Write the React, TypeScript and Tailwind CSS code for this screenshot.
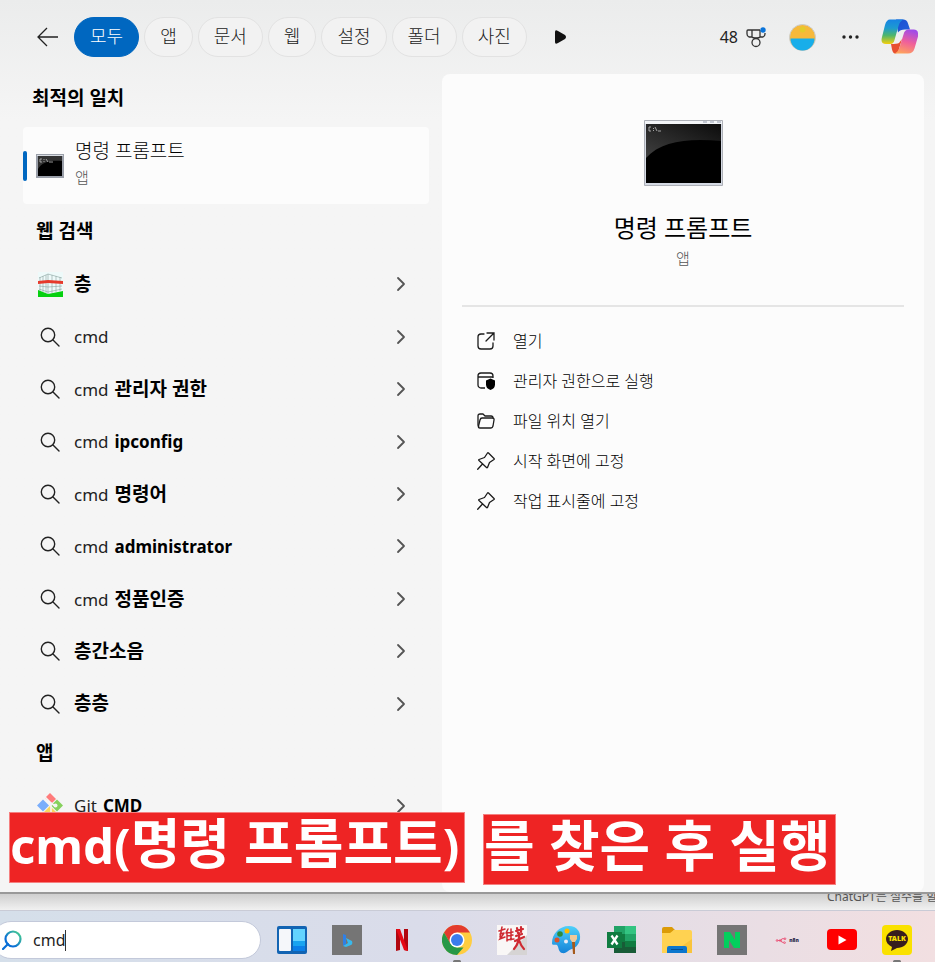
import { ChevronRight } from 'lucide-react';
import type { ReactNode } from 'react';

const filters = ['모두', '앱', '문서', '웹', '설정', '폴더', '사진'];

interface Suggestion {
  query?: string;
  match?: string;
  icon?: ReactNode;
  latin?: boolean;
}

const SearchIcon = () => (
  <svg width="20" height="20" viewBox="0 0 20 20" fill="none" stroke="#222" strokeWidth="1.4">
    <circle cx="8" cy="8" r="6.7" />
    <path d="M13 13l6 6" strokeLinecap="round" />
  </svg>
);

const BuildingIcon = () => (
  <svg width="25" height="25" viewBox="0 0 25 25">
    <path fill="#eefafa" d="M0 0h25v25H0z" />
    <path d="M1 6l9-4 14 4M1 10h23M1 14l9 1 14-1M1 17l9 3 14-3M2 5v14M5 4v16M8 3v18M10 2v20M14 3v18M18 4v16M22 5v14" fill="none" stroke="#8aa3a0" strokeWidth="0.6" />
    <path fill="#e63a2c" d="M0 9l10-1 15 1v3l-15-1-10 1z" />
    <path fill="#06d010" d="M0 18l10 4 15-3v6H0z" />
  </svg>
);

const GitIcon = () => (
  <svg width="26" height="26" viewBox="0 0 26 26">
    <path fill="#ff7b7b" d="M13 0l6 6-4 4-2-1-5-4z" />
    <path fill="#7aaefb" d="M6 6.5l6 6-6 6-6-6z" />
    <path fill="#86d15d" d="M20 6.500l6 6-6 6-6-6z" />
    <path fill="#fbd75c" d="M13 13l6 6-6 6-6-6z" />
    <path d="M8 4l6 6v9M14 10l4 3" fill="none" stroke="#f5f5f5" strokeWidth="1.600" />
    <circle cx="18.500" cy="12.500" r="2" fill="#f5f5f5" />
  </svg>
);

const suggestions: Suggestion[] = [
  { match: '층', icon: <BuildingIcon /> },
  { query: 'cmd' },
  { query: 'cmd', match: '관리자 권한' },
  { query: 'cmd', match: 'ipconfig', latin: true },
  { query: 'cmd', match: '명령어' },
  { query: 'cmd', match: 'administrator', latin: true },
  { query: 'cmd', match: '정품인증' },
  { match: '층간소음' },
  { match: '층층' },
];

const SuggestionRow = ({ query, match, icon, latin }: Suggestion) => (
  <button className="flex min-h-0 flex-1 items-center pl-[13px] pr-4 text-left">
    <span className="flex w-7 shrink-0 justify-center">{icon ?? <SearchIcon />}</span>
    <span className="ml-[10px] flex flex-1 items-baseline gap-[6px] whitespace-nowrap">
      {query && <span className="text-[17px] text-[#222]">{query}</span>}
      {match && <b className={latin ? 'text-[17px]' : 'text-[19px]'}>{match}</b>}
    </span>
    <ChevronRight size={24} strokeWidth={1.8} className="text-[#555]" />
  </button>
);

const ConsoleIcon = ({ className }: { className: string }) => (
  <svg className={className} viewBox="0 0 79 66">
    <path fill="#d5dae4" stroke="#aeb1b8" d="M.5.5h78v65H.5z" />
    <path fill="#f3f5f8" d="M1 1h77v3H1z" />
    <path fill="#c3c8d2" d="M59 1h4v2h-4zM66 1h4v2h-4zM73 1h4v2h-4z" />
    <path fill="#000" d="M2 4h75v59H2z" />
    <path fill="url(#glass)" d="M2 4h75v17C44 18 17 21 2 38z" />
    <defs>
      <linearGradient id="glass" x1="0" y1="1" x2="1" y2="0">
        <stop offset="0" stopColor="#404040" />
        <stop offset="1" stopColor="#0c0c0c" />
      </linearGradient>
    </defs>
    <path d="M7 7H5v4h2M9.500 8v1M9.500 10v1M11 7l2 4M14 11h3" fill="none" stroke="#c4c4c4" strokeWidth=".8" />
  </svg>
);

const SmallConsoleIcon = () => (
  <svg width="28" height="24" viewBox="0 0 28 24">
    <path fill="#9a9fa9" d="M0 0h28v24H0z" />
    <path fill="#d9dde3" d="M1 1h26v1H1z" />
    <path fill="#000" d="M2 2h24v20H2z" />
    <path fill="#333" d="M2 2h24v5C14 6 6 8 2 15z" />
    <path d="M6 5H4v3h2M8 5v1M8 7v1M10 5l2 3M13 8h4" fill="none" stroke="#bbb" strokeWidth=".8" />
  </svg>
);

const OpenIcon = () => (
  <svg width="18" height="18" viewBox="0 0 18 18" fill="none" stroke="#1b1b1b" strokeWidth="1.300" strokeLinecap="round">
    <path d="M7 2H4a3 3 0 0 0-3 3v9a3 3 0 0 0 3 3h9a3 3 0 0 0 3-3v-3M10 1h7v7M17 1l-8 8" />
  </svg>
);

const AdminIcon = () => (
  <svg width="18" height="18" viewBox="0 0 18 18" fill="none" stroke="#1b1b1b" strokeWidth="1.300">
    <path d="M8 16H4a3 3 0 0 1-3-3V4a3 3 0 0 1 3-3h9a3 3 0 0 1 3 3v2M1 5h15" />
    <path fill="#000" stroke="none" d="M13.500 6.500l4.500 2v4q0 4-4.500 5.500Q9 16.500 9 12.500v-4z" />
  </svg>
);

const FolderIcon = () => (
  <svg width="18" height="16" viewBox="0 0 18 16" fill="none" stroke="#1b1b1b" strokeWidth="1.300" strokeLinejoin="round">
    <path d="M2 14Q1 13 1 12V3q0-2 2-2h3l2 2h6q2 0 2 2" />
    <path d="M5 5h10q2.500 0 2 2l-1 6q-.5 2-2 2H3q-2 0-1.500-2L3 7q.5-2 2-2z" />
  </svg>
);

const PinIcon = () => (
  <svg width="18" height="18" viewBox="0 0 18 18" fill="none" stroke="#1b1b1b" strokeWidth="1.300" strokeLinejoin="round" strokeLinecap="round">
    <path d="M10.500 1Q11 .5 11.500 1L17 6.500Q17.500 7 17 7.500L12.500 10.500 10.500 15.500Q10 16 9.500 15.500L2 8.500Q1.500 8 2 7.500L7.500 5.500zM5.500 12L.7 17.300" />
  </svg>
);

const actions = [
  { label: '열기', icon: <OpenIcon /> },
  { label: '관리자 권한으로 실행', icon: <AdminIcon /> },
  { label: '파일 위치 열기', icon: <FolderIcon /> },
  { label: '시작 화면에 고정', icon: <PinIcon /> },
  { label: '작업 표시줄에 고정', icon: <PinIcon /> },
];

const CopilotIcon = () => (
  <svg width="38" height="36" viewBox="0 0 38 36">
    <defs>
      <linearGradient id="cpA" x1="0" y1="0" x2="0" y2="1">
        <stop offset="0" stopColor="#1783e4" />
        <stop offset=".35" stopColor="#1d9bd0" />
        <stop offset=".65" stopColor="#4fb66b" />
        <stop offset="1" stopColor="#f5cf0b" />
      </linearGradient>
      <linearGradient id="cpB" x1=".6" y1="0" x2=".3" y2="1">
        <stop offset="0" stopColor="#a14be8" />
        <stop offset=".5" stopColor="#f0609a" />
        <stop offset="1" stopColor="#ffa45c" />
      </linearGradient>
      <linearGradient id="cpC" x1="0" y1="0" x2="1" y2="1">
        <stop offset="0" stopColor="#1b4fd0" />
        <stop offset="1" stopColor="#2360dc" />
      </linearGradient>
    </defs>
    <path fill="url(#cpC)" d="M15 .5h7q4 0 5 4l2 6h-5q-5 0-7 3z" />
    <path fill="#e8502e" d="M10 25q6 0 8-1l3-4-3 10q-1 4.500-4 4.500-2 0-3-4z" />
    <path fill="url(#cpA)" d="M9 .5h14q-4 1-5.500 6.500L13.500 21q-1 4-4 4H5q-6 0-4-7L4 6Q5.500.5 9 .5z" />
    <path fill="url(#cpB)" d="M28 10.500h5q5 0 4 7l-3.500 12q-1.500 5-6.500 5H13q4-1 5.500-6l4-13q1-5 5.500-5z" />
  </svg>
);

const MedalIcon = () => (
  <svg width="20" height="21" viewBox="0 0 20 21" fill="none" stroke="#333" strokeWidth="1.300">
    <path d="M14 3H2Q1 3 1 4v3q0 2 2 3h3q1 1 3 1h2q2 0 3-1h3q2-1 2-3V6M6 3v7M14 3v7" />
    <circle cx="10" cy="15.500" r="4" />
    <circle cx="17" cy="3" r="2.700" fill="#0a74da" stroke="none" />
  </svg>
);

const WidgetsIcon = () => (
  <svg width="30" height="30" viewBox="0 0 30 30">
    <rect y="1" width="30" height="28" rx="2" fill="#1264b3" />
    <rect x="2" y="4" width="12" height="22" rx="1" fill="#f5f7fa" />
    <path fill="#63d4ff" d="M16 4h12v12H16z" />
    <path fill="#18a4f0" d="M16 16h12v5H16z" />
    <path fill="#0a7fe8" d="M16 21h12v5H16z" />
  </svg>
);

const BingIcon = () => (
  <svg width="30" height="30" viewBox="0 0 30 30">
    <path fill="#757575" d="M0 0h30v30H0z" />
    <path fill="#2f80e6" d="M11 9l3 1v9l-3 2z" />
    <path fill="#38b9ed" d="M14 13l6 3q1 3-1 4l-5 2-3-1 5-3z" />
  </svg>
);

const NetflixIcon = () => (
  <svg width="30" height="30" viewBox="0 0 30 30">
    <path fill="#b1060f" d="M9 4h4v21l-4 1zM17 4h4v22l-4-1z" />
    <path fill="#e50914" d="M9 4h4l8 22-4-1z" />
  </svg>
);

const ChromeIcon = () => (
  <svg width="30" height="30" viewBox="0 0 30 30">
    <circle cx="15" cy="15" r="15" fill="#ffcd40" />
    <path fill="#e33b2e" d="M2 7.500A15 15 0 0 1 28 7.500H15L8.500 19z" />
    <path fill="#279847" d="M2 7.500L8.500 18.700 15 22.500h6.500L15 30A15 15 0 0 1 2 7.500z" />
    <circle cx="15" cy="15" r="7.500" fill="#fff" />
    <circle cx="15" cy="15" r="6" fill="#3b7cec" />
  </svg>
);

const CalligraphyIcon = () => (
  <svg width="30" height="30" viewBox="0 0 30 30">
    <path fill="#f9f7f6" d="M0 0h30v30H0z" />
    <path fill="#d6d4d4" d="M30 10v20H10z" />
    <g stroke="#cf2a32" fill="none" strokeLinecap="round">
      <path d="M2 6l6-2M5 2L3 12M3 9l4-1M7 8l-4 6 5-2M11 4l-2 4M10 7v9M14 4v11M10 8l6-1M10 11l6-1M10 15l7-1" strokeWidth="1.500" />
      <path d="M19 6l7-2M20 3l1 5M24 2v5M19 11l6-2M18 16l9-4M22 8q1 9-5 16M22 15q2 6 5 9" strokeWidth="2.200" />
    </g>
  </svg>
);

const PaintIcon = () => (
  <svg width="30" height="30" viewBox="0 0 30 30">
    <defs>
      <linearGradient id="palette" x1="0" y1="0" x2="0" y2="1">
        <stop offset="0" stopColor="#4fd0fa" />
        <stop offset="1" stopColor="#1583d8" />
      </linearGradient>
    </defs>
    <path fill="url(#palette)" d="M17 1c8 0 12 6 11 13-1 6-5 9-8 10-3 0-5 5-10 4-4-1-3-6-5-8-2-1-5 1-5-2C0 9 7 1 17 1z" />
    <circle cx="15" cy="6" r="2.500" fill="#ffb900" />
    <circle cx="8" cy="9" r="2.800" fill="#2d8b3c" />
    <circle cx="5" cy="15" r="2.500" fill="#d9532c" />
    <circle cx="14" cy="16.500" r="2" fill="#eaeaf5" />
    <path fill="#f0c99a" d="M18 10h7v4l-2 3h-3l-2-3z" />
    <path fill="#a55a1c" d="M20 17h3v12h-2z" />
  </svg>
);

const ExcelIcon = () => (
  <svg width="30" height="30" viewBox="0 0 30 30">
    <path fill="#21a366" d="M7 1h11v8H7z" />
    <path fill="#33c481" d="M18 1h11v8H18z" />
    <path fill="#107c41" d="M7 9h11v8H7z" />
    <path fill="#21a366" d="M18 9h11v7H18z" />
    <path fill="#107c41" d="M18 16h11v6H18z" />
    <path fill="#185c37" d="M7 17h11v5h11v6H7z" />
    <path fill="#107c41" d="M0 7h15v16H0z" />
    <path d="M4.500 10.500l6 9M10.500 10.500l-6 9" stroke="#fff" strokeWidth="2.300" />
  </svg>
);

const ExplorerIcon = () => (
  <svg width="30" height="30" viewBox="0 0 30 30">
    <path fill="#dc9b07" d="M0 4q0-2 2-2h8l3 3h-1L9 9H0z" />
    <path fill="#ffd251" d="M0 8h8l4-3h16q2 0 2 2v21H0z" />
    <path fill="#f9c43c" d="M30 14v14H10z" />
    <path fill="#0c76cd" d="M5 23q0-2 2-2h16q2 0 2 2v5H5z" />
    <path fill="#064f91" d="M9 24h12v1H9z" />
  </svg>
);

const NaverIcon = () => (
  <svg width="30" height="30" viewBox="0 0 30 30">
    <path fill="#757575" d="M0 0h30v30H0z" />
    <path fill="#03cf5d" d="M7 7h6l5 8V7h5v16h-6l-5-8v8H7z" />
  </svg>
);

const N8nIcon = () => (
  <span className="flex w-[30px] items-center justify-center gap-[2px]">
    <svg width="12" height="7" viewBox="0 0 12 8" fill="none" stroke="#ea4b71">
      <circle cx="1.500" cy="4" r="1" />
      <circle cx="5" cy="4" r="1" />
      <circle cx="10.500" cy="2" r="1" />
      <circle cx="10" cy="6.500" r="1" />
      <path d="M2 4h4l1-2h3M6 4l1 2h2" />
    </svg>
    <span className="text-[5px] font-black leading-none text-[#29264a]">n8n</span>
  </span>
);

const YoutubeIcon = () => (
  <svg width="30" height="30" viewBox="0 0 30 30">
    <rect y="4" width="30" height="21" rx="4" fill="#f00" />
    <path fill="#fff" d="M11.500 10.500l8 4.500-8 4.500z" />
  </svg>
);

const TalkIcon = () => (
  <span className="relative flex h-[30px] w-[30px] items-center justify-center rounded-[4px] bg-[#fae100]">
    <svg width="24" height="23" viewBox="0 0 24 23" className="absolute">
      <path fill="#371d1e" d="M12 1c6 0 11 4 11 9s-5 9-11 9l-6 3 1-4c-4-2-6-5-6-8 0-5 5-9 11-9z" />
    </svg>
    <span className="relative pb-[3px] text-[7px] font-black leading-none text-[#fae100]">TALK</span>
  </span>
);

const taskbarApps = [
  { name: '위젯', icon: <WidgetsIcon /> },
  { name: 'Bing', icon: <BingIcon /> },
  { name: 'Netflix', icon: <NetflixIcon /> },
  { name: 'Chrome', icon: <ChromeIcon />, running: true },
  { name: '영웅', icon: <CalligraphyIcon /> },
  { name: '그림판', icon: <PaintIcon /> },
  { name: 'Excel', icon: <ExcelIcon /> },
  { name: '파일 탐색기', icon: <ExplorerIcon /> },
  { name: '네이버', icon: <NaverIcon /> },
  { name: 'n8n', icon: <N8nIcon /> },
  { name: 'YouTube', icon: <YoutubeIcon /> },
  { name: '카카오톡', icon: <TalkIcon />, running: true },
];

const Header = () => (
  <header className="flex h-[74px] items-center pl-[37px] pr-4">
    <button aria-label="뒤로">
      <svg width="21" height="20" viewBox="0 0 21 20" fill="none" stroke="#222" strokeWidth="1.300">
        <path d="M21 10H1M10 1l-9 9 9 9" />
      </svg>
    </button>
    <nav className="ml-4 flex gap-[5px]">
      {filters.map((name, i) => (
        <button
          key={name}
          className={`h-10 whitespace-nowrap rounded-full border px-[15px] pb-[2px] text-[18px] font-light leading-none ${
            i === 0 ? 'border-[#0067c0] bg-[#0067c0] text-white' : 'border-[#e2e2e2] bg-[#f2f2f2] text-[#1b1b1b]'
          }`}
        >
          {name}
        </button>
      ))}
    </nav>
    <button aria-label="더 보기" className="ml-[27px]">
      <svg width="13" height="16" viewBox="0 0 13 16">
        <path fill="#111" d="M1 3q0-3 3-1l7 4q2 2 0 4l-7 4q-3 2-3-1z" />
      </svg>
    </button>
    <div className="ml-auto flex items-center">
      <button className="flex items-center gap-2 text-[16px] text-[#222]">
        48
        <MedalIcon />
      </button>
      <button aria-label="계정" className="ml-[23px]">
        <svg width="27" height="27" viewBox="0 0 27 27">
          <circle cx="13.500" cy="13.500" r="13" fill="#f6b93b" stroke="#c9ccce" />
          <path fill="#18aeea" d="M1.500 14.500h24a12 12 0 0 1-24 0z" />
          <circle cx="13.500" cy="5.500" r="3" fill="#e3cb2b" />
        </svg>
      </button>
      <button aria-label="옵션" className="ml-[26px]">
        <svg width="17" height="4" viewBox="0 0 17 4" fill="#222">
          <circle cx="2" cy="2" r="1.700" />
          <circle cx="8.500" cy="2" r="1.700" />
          <circle cx="15" cy="2" r="1.700" />
        </svg>
      </button>
      <button aria-label="Copilot" className="ml-[22px]">
        <CopilotIcon />
      </button>
    </div>
  </header>
);

const Results = () => (
  <section className="flex w-[442px] shrink-0 flex-col pl-[23px] pr-[13px]">
    <h2 className="flex h-[53px] items-center pb-1 pl-[9px] text-[19px] font-bold">최적의 일치</h2>
    <button className="flex h-[77px] items-center rounded-[4px] bg-[#fcfcfc] text-left">
      <span className="h-[30px] w-1 rounded-full bg-[#0067c0]" />
      <span className="ml-[9px]">
        <SmallConsoleIcon />
      </span>
      <span className="ml-[11px] flex flex-col gap-1 pb-[6px]">
        <span className="text-[19px] font-light leading-6">명령 프롬프트</span>
        <span className="text-[15px] font-light leading-5 text-[#555]">앱</span>
      </span>
    </button>
    <h2 className="flex h-[54px] items-center pl-[13px] text-[19px] font-bold">웹 검색</h2>
    <div className="flex h-[472px] flex-col">
      {suggestions.map((item) => (
        <SuggestionRow key={`${item.query}-${item.match}`} {...item} />
      ))}
    </div>
    <h2 className="flex h-[50px] items-center pb-1 pl-[13px] text-[19px] font-bold">앱</h2>
    <div className="flex h-[52px] flex-col">
      <SuggestionRow query="Git" match="CMD" latin icon={<GitIcon />} />
    </div>
  </section>
);

const Details = () => (
  <section className="mr-[11px] min-w-0 flex-1 rounded-[8px] bg-[#fcfcfc] px-5 pt-[46px]">
    <div className="flex flex-col items-center border-b-2 border-[#e5e5e5] pb-[37px]">
      <ConsoleIcon className="h-[66px] w-[79px]" />
      <h1 className="mt-[26px] text-[24px] leading-8">명령 프롬프트</h1>
      <p className="mt-1 text-[15px] font-light leading-5 text-[#555]">앱</p>
    </div>
    <ul className="pt-[14px]">
      {actions.map(({ label, icon }) => (
        <li key={label}>
          <button className="flex h-10 items-center text-[16px] font-light">
            <span className="flex w-12 justify-center">{icon}</span>
            <span className="ml-[3px] whitespace-nowrap">{label}</span>
          </button>
        </li>
      ))}
    </ul>
  </section>
);

const Taskbar = () => (
  <footer className="flex h-[52px] items-center overflow-hidden border-t border-[#c9cbd6] bg-linear-to-r from-[#d5dfea] via-[#dadcea] via-45% to-[#f2dfe1] pt-[7px]">
    <label className="-ml-2 flex h-[38px] w-[269px] shrink-0 items-center rounded-full border border-[#c3c9da] bg-white pl-[9px]">
      <svg width="20" height="20" viewBox="0 0 20 20" fill="none" strokeWidth="2.200">
        <defs>
          <linearGradient id="lens" x1="0" y1="1" x2="1" y2="0">
            <stop offset=".3" stopColor="#0a6fd6" />
            <stop offset="1" stopColor="#4bd58a" />
          </linearGradient>
        </defs>
        <circle cx="11" cy="9" r="7.500" stroke="url(#lens)" />
        <path d="M6 14l-5 5" stroke="#0a6fd6" strokeLinecap="round" />
      </svg>
      <span className="relative ml-[11px] min-w-0 flex-1">
        <input aria-label="검색" defaultValue="cmd" className="w-full bg-transparent text-[16px] text-[#222] outline-none" />
        <span className="absolute left-8 top-[2px] h-[21px] w-px bg-[#333]" />
      </span>
    </label>
    <div className="ml-4 flex shrink-0 gap-[25px]">
      {taskbarApps.map(({ name, icon, running }) => (
        <button key={name} aria-label={name} className="relative flex h-[30px] w-[30px] items-center justify-center">
          {icon}
          {running && <span className="absolute left-[11px] top-[35px] h-[3px] w-2 rounded-full bg-[#777]" />}
        </button>
      ))}
    </div>
  </footer>
);

export default function App() {
  return (
    <div className="relative flex min-h-screen flex-col overflow-hidden bg-[#f3f3f3] font-['Noto_Sans','Noto_Sans_CJK_KR',sans-serif] text-black">
      <main className="flex flex-1 flex-col border-b-2 border-[#999] bg-linear-to-b from-[#ebecec] to-[#f5f5f5] to-[120px]">
        <Header />
        <div className="flex flex-1">
          <Results />
          <Details />
        </div>
      </main>
      <div className="flex h-4 justify-end overflow-hidden bg-linear-to-b from-[#cfcfcf] to-[#f1f1f1]">
        <p className="-mt-[7px] w-[108px] overflow-hidden whitespace-nowrap text-[12px] leading-5 text-[#555]">ChatGPT는 실수를 할</p>
      </div>
      <Taskbar />

      {/* callout over the panel */}
      <div className="absolute left-[9px] top-[812px] flex items-start gap-[18px] whitespace-nowrap font-bold text-white">
        <p className="flex h-[71px] w-[456px] items-baseline border border-[#f58080] bg-[#ee2424] text-[54px] leading-[60px]">
          <span className="text-[49px]">cmd(</span>명령 프롬프트<span className="text-[49px]">)</span>
        </p>
        <p className="mt-[2px] h-[71px] w-[353px] border border-[#f58080] bg-[#ee2424] text-[55px] leading-[60px]">를 찾은 후 실행</p>
      </div>
    </div>
  );
}
